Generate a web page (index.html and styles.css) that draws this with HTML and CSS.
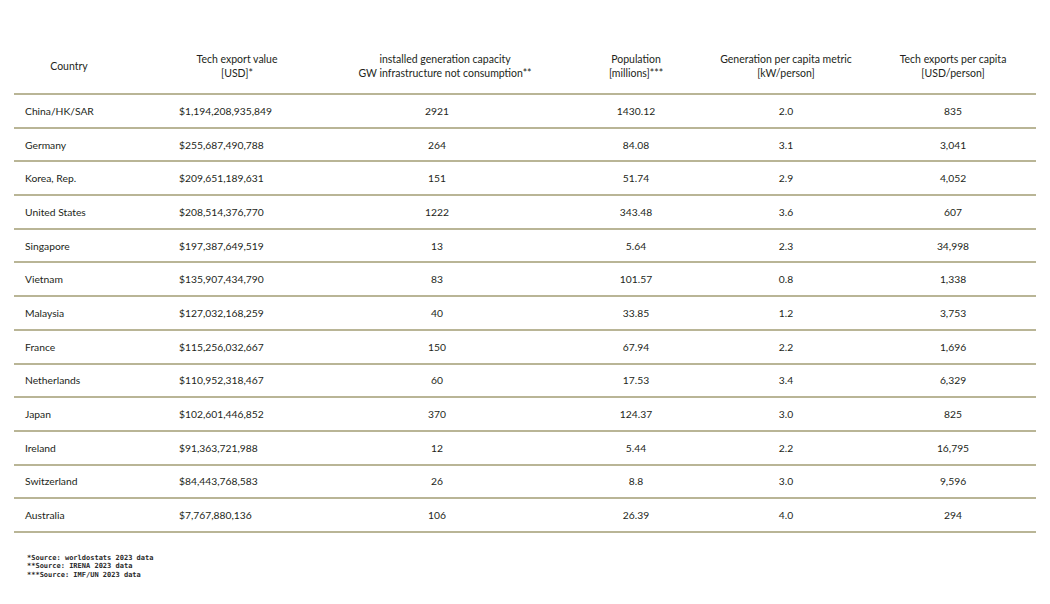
FILE: index.html
```html
<!DOCTYPE html>
<html>
<head>
<meta charset="utf-8">
<link rel="stylesheet" href="styles.css">
</head>
<body>
<div class="page">
  <div class="table">
    <div class="row head">
      <div class="c c1">Country</div>
      <div class="c c2">Tech export value<br>[USD]*</div>
      <div class="c c3">installed generation capacity<br>GW infrastructure not consumption**</div>
      <div class="c c4">Population<br>[millions]***</div>
      <div class="c c5">Generation per capita metric<br>[kW/person]</div>
      <div class="c c6">Tech exports per capita<br>[USD/person]</div>
    </div>
    <div class="row"><div class="c c1">China/HK/SAR</div><div class="c c2">$1,194,208,935,849</div><div class="c c3">2921</div><div class="c c4">1430.12</div><div class="c c5">2.0</div><div class="c c6">835</div></div>
    <div class="row"><div class="c c1">Germany</div><div class="c c2">$255,687,490,788</div><div class="c c3">264</div><div class="c c4">84.08</div><div class="c c5">3.1</div><div class="c c6">3,041</div></div>
    <div class="row"><div class="c c1">Korea, Rep.</div><div class="c c2">$209,651,189,631</div><div class="c c3">151</div><div class="c c4">51.74</div><div class="c c5">2.9</div><div class="c c6">4,052</div></div>
    <div class="row"><div class="c c1">United States</div><div class="c c2">$208,514,376,770</div><div class="c c3">1222</div><div class="c c4">343.48</div><div class="c c5">3.6</div><div class="c c6">607</div></div>
    <div class="row"><div class="c c1">Singapore</div><div class="c c2">$197,387,649,519</div><div class="c c3">13</div><div class="c c4">5.64</div><div class="c c5">2.3</div><div class="c c6">34,998</div></div>
    <div class="row"><div class="c c1">Vietnam</div><div class="c c2">$135,907,434,790</div><div class="c c3">83</div><div class="c c4">101.57</div><div class="c c5">0.8</div><div class="c c6">1,338</div></div>
    <div class="row"><div class="c c1">Malaysia</div><div class="c c2">$127,032,168,259</div><div class="c c3">40</div><div class="c c4">33.85</div><div class="c c5">1.2</div><div class="c c6">3,753</div></div>
    <div class="row"><div class="c c1">France</div><div class="c c2">$115,256,032,667</div><div class="c c3">150</div><div class="c c4">67.94</div><div class="c c5">2.2</div><div class="c c6">1,696</div></div>
    <div class="row"><div class="c c1">Netherlands</div><div class="c c2">$110,952,318,467</div><div class="c c3">60</div><div class="c c4">17.53</div><div class="c c5">3.4</div><div class="c c6">6,329</div></div>
    <div class="row"><div class="c c1">Japan</div><div class="c c2">$102,601,446,852</div><div class="c c3">370</div><div class="c c4">124.37</div><div class="c c5">3.0</div><div class="c c6">825</div></div>
    <div class="row"><div class="c c1">Ireland</div><div class="c c2">$91,363,721,988</div><div class="c c3">12</div><div class="c c4">5.44</div><div class="c c5">2.2</div><div class="c c6">16,795</div></div>
    <div class="row"><div class="c c1">Switzerland</div><div class="c c2">$84,443,768,583</div><div class="c c3">26</div><div class="c c4">8.8</div><div class="c c5">3.0</div><div class="c c6">9,596</div></div>
    <div class="row"><div class="c c1">Australia</div><div class="c c2">$7,767,880,136</div><div class="c c3">106</div><div class="c c4">26.39</div><div class="c c5">4.0</div><div class="c c6">294</div></div>
  </div>
  <div class="notes">
    <div>*Source: worldostats 2023 data</div>
    <div>**Source: IRENA 2023 data</div>
    <div>***Source: IMF/UN 2023 data</div>
  </div>
</div>
</body>
</html>
```

FILE: styles.css
```css
html, body {
  margin: 0;
  padding: 0;
  background: #ffffff;
}
.page {
  width: 1050px;
  height: 604px;
  padding-top: 37px;
  box-sizing: border-box;
  font-family: Lato, "Open Sans", sans-serif;
  color: #231f20;
  font-size: 10.3px;
}
.table {
  margin-left: 14px;
  width: 1022px;
}
.row {
  display: grid;
  grid-template-columns: 110px 180px 266px 132px 168px 166px;
  height: 33.7px;
  box-sizing: border-box;
  border-bottom: 2px solid #b9b596;
  align-items: center;
}
.row.head {
  height: 58px;
  line-height: 14px;
  font-size: 10.5px;
  padding-top: 2px;
}
.c {
  display: flex;
  justify-content: center;
  text-align: center;
  white-space: nowrap;
}
.row .c1, .row .c2 {
  justify-content: flex-start;
}
.row .c1 { padding-left: 11px; }
.row .c2 { padding-left: 55px; }
.head .c1 { justify-content: center; padding-left: 0; }
.head .c2 { justify-content: center; padding-left: 46px; }
.head .c3 { padding-left: 16px; }
.notes {
  margin-top: 21px;
  margin-left: 27px;
  font-family: "DejaVu Sans Mono", "Liberation Mono", monospace;
  font-size: 7px;
  font-weight: bold;
  line-height: 8.5px;
  color: #2a2a2a;
}
```
